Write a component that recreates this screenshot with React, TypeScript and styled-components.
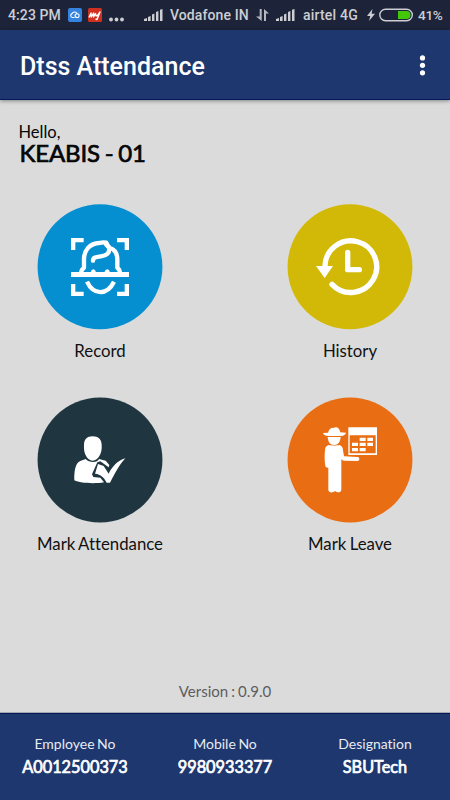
import React from "react";
import styled, { createGlobalStyle } from "styled-components";

const GlobalStyle = createGlobalStyle`
  * { box-sizing: border-box; }
  body { margin: 0; background: #dbdbdb; }
`;

const Screen = styled.div`
  width: 450px;
  height: 800px;
  display: flex;
  flex-direction: column;
  background: #dbdbdb;
  font-family: Lato, sans-serif;
  font-variant-ligatures: none;
  overflow: hidden;
`;

const StatusBar = styled.div`
  height: 30px;
  flex: none;
  display: grid;
  grid-template-columns: 60px 20px 21px 35px 26px 86px 20px 27px 64px 12px 39px 32px;
  padding-left: 8px;
  align-items: center;
  background: #1d2439;
  color: #cdced3;
`;

const StatusText = styled.span<{ $size?: number; $spacing?: number }>`
  font: 500 ${(p) => p.$size ?? 14}px/30px Roboto, sans-serif;
  letter-spacing: ${(p) => p.$spacing ?? 0}px;
  white-space: nowrap;
`;

const Glyph = styled.svg`
  display: block;
`;

const AppBar = styled.header`
  height: 70px;
  flex: none;
  display: flex;
  align-items: center;
  justify-content: space-between;
  padding: 2px 20px 0;
  background: #1e376f;
  border-bottom: 1px solid #04195c;
  box-shadow: 0 1px 4px rgba(0, 0, 0, 0.4);
  z-index: 1;
`;

const Title = styled.h1`
  margin: 0;
  padding-top: 2px;
  font: 500 25px/30px Roboto, sans-serif;
  color: #fff;
`;

const MenuButton = styled.button`
  border: 0;
  padding: 0;
  background: none;
  width: 15px;
  height: 24px;
`;

const Content = styled.main`
  flex: 1;
  display: flex;
  flex-direction: column;
`;

const Greeting = styled.section`
  height: 104px;
  padding: 22px 18.5px 0;
  color: #050505;
`;

const Hello = styled.div`
  font-size: 16.5px;
  line-height: 20px;
`;

const UserName = styled.div`
  padding-left: 1px;
  font-size: 24px;
  line-height: 22px;
  letter-spacing: -0.15px;
  word-spacing: -1.2px;
  -webkit-text-stroke: 0.7px #050505;
`;

const Tiles = styled.section`
  display: grid;
  grid-template-columns: 1fr 1fr;
  grid-auto-rows: 193px;
  column-gap: 50px;
`;

const Tile = styled.div`
  display: flex;
  flex-direction: column;
  align-items: center;
`;

const TileLabel = styled.div`
  margin-top: 10px;
  font-size: 16.8px;
  line-height: 22px;
  white-space: nowrap;
  word-spacing: -1px;
  color: #111;
`;

const Version = styled.div`
  margin-top: auto;
  padding-bottom: 12px;
  text-align: center;
  font-size: 15px;
  line-height: 20px;
  word-spacing: -0.8px;
  color: #5d5d5d;
`;

const Footer = styled.footer`
  height: 87px;
  flex: none;
  display: grid;
  grid-template-columns: repeat(3, 1fr);
  padding-top: 19px;
  background: #1e376f;
  border-top: 1px solid #04195c;
  box-shadow: 0 -1px 0 #a6a8ad;
  color: #fff;
  text-align: center;
`;

const FieldName = styled.div`
  font-size: 14px;
  line-height: 22px;
  word-spacing: -1px;
  color: #e8ebf2;
`;

const FieldValue = styled.div`
  font-size: 16.3px;
  line-height: 24px;
  -webkit-text-stroke: 0.7px #fff;
`;

const Signal = () => (
  <Glyph width="20" height="14" viewBox="0 0 20 14" fill="#cdced3">
    <path d="M0 13v-2l3-1v3zM4 13V9l2.6-1v5zM8 13V6.5l2.4-1V13zM12 13V4l2.4-1v10zM16 13V1.8L18.5 1v12z" />
  </Glyph>
);

const RecordIcon = ({ color }: { color: string }) => (
  <Glyph width="126" height="126" viewBox="21 27 378 378" fill="none" stroke="#fff">
    <circle cx="210" cy="215.300" r="187.300" fill={color} stroke="none" />
    <path strokeWidth="13" d="M129.500 165V135.500H161M261 135.500H290.500V165M129.500 267V296.500H161M261 296.500H290.500V267" />
    <path fill="#fff" stroke="none" d="M123 231h174v15H123z" />
    <path strokeWidth="13" strokeLinejoin="round" d="M153 233l3-9 6-6V195C161 165 180 145 208 144C216 142 224 142 229 143C231 150 234 155 240 159C256 164 262 176 262 195V218l6 7 2 8" />
    <path strokeWidth="13" strokeLinecap="round" strokeLinejoin="round" d="M189 197C189 187 198 186 213 184C230 182 240 174 237 158L228 148" />
    <path fill="#fff" stroke="none" d="M182 232q2-9 8-9t8 9zM223 232q3-9 9-9t8 9z" />
    <path strokeWidth="13" d="M171 260C190 301 231 302 252 260" />
  </Glyph>
);

const HistoryIcon = ({ color }: { color: string }) => (
  <Glyph width="126" height="126" viewBox="21 27 378 378" fill="none" stroke="#fff" strokeLinecap="round">
    <circle cx="210" cy="215.300" r="187.300" fill={color} stroke="none" />
    <path strokeWidth="16" d="M135 216A77.500 77.500 0 1 1 156 268" />
    <path fill="#fff" stroke="none" d="M108 213H159L134 249z" />
    <path strokeWidth="16" strokeLinejoin="round" d="M203 172V224H238" />
  </Glyph>
);

const AttendanceIcon = ({ color }: { color: string }) => (
  <Glyph width="126" height="126" viewBox="21 21 378 378" fill="#fff">
    <circle cx="210" cy="210" r="187.300" fill={color} />
    <path d="M188 139C205 139 215 149 215 165C217 190 205 211 188 212C171 211 160 190 162 165C162 149 171 139 188 139z" />
    <path d="M167 207C175 217 202 221 207 207L227 212L238 225L236 232L211 214L202 217L186 253L190 261L211 263L222 277C194 282 151 280 133 271C132 245 136 218 151 213z" />
    <path d="M204 222L221 228L236 251C246 231 262 212 286 205C266 226 255 251 240 278H230C224 265 212 252 195 251z" />
  </Glyph>
);

const LeaveIcon = ({ color }: { color: string }) => (
  <Glyph width="126" height="126" viewBox="21 21 378 378" fill="#fff">
    <circle cx="210" cy="210" r="187.300" fill={color} />
    <path d="M129 129L144 128C147 117 155 112 161 114C168 108 179 113 181 127L198 128C197 135 188 138 180 138H145C138 138 130 135 129 129z" />
    <path d="M143 141H182C181 156 174 165 162 165S144 156 143 141z" />
    <path d="M146 165C152 167 173 167 179 165C186 168 189 173 189 181L192 199L233 201C239 202 240 210 234 213L191 212L184 208V299C183 308 172 309 165 303C157 310 146 308 145 300V234L137 231C134 221 133 201 135 181C135 172 139 167 146 165z" />
    <path fillRule="evenodd" d="M205 112h86v83h-86zM209 136v54h78v-54z" />
    <path d="M239 143h18v10h-18zM262 143h17v10h-17zM216 158h18v10h-18zM239 158h18v10h-18zM262 158h17v10h-17zM216 174h18v10h-18zM239 174h18v10h-18z" />
  </Glyph>
);

const tiles = [
  { label: "Record", color: "#058fd1", Icon: RecordIcon },
  { label: "History", color: "#d2b908", Icon: HistoryIcon },
  { label: "Mark Attendance", color: "#1f3641", Icon: AttendanceIcon },
  { label: "Mark Leave", color: "#e96d12", Icon: LeaveIcon },
];

const fields = [
  { name: "Employee No", value: "A0012500373" },
  { name: "Mobile No", value: "9980933377" },
  { name: "Designation", value: "SBUTech" },
];

export default function App() {
  return (
    <>
      <GlobalStyle />
      <Screen>
        <StatusBar>
          <StatusText $spacing={0.1}>4:23 PM</StatusText>
          <Glyph width="14" height="14" viewBox="0 0 14 14">
            <rect width="14" height="14" rx="2" fill="#3484df" />
            <path d="M6.500 9.500H4.500a2 2 0 0 1-.4-3.900A2.800 2.800 0 0 1 9 5.200M8.200 9.500a2 2 0 1 1 1.800 0zM8.400 9.400L6.500 7.400" fill="none" stroke="#fff" strokeWidth="1.100" />
          </Glyph>
          <Glyph width="14" height="14" viewBox="0 0 14 14">
            <rect width="14" height="14" rx="1.500" fill="#d0301f" />
            <path d="M1 9.500L3 5L3.200 9L5.600 5L5.500 9L7.500 5.500L8 7.800L9.500 7.500L12 4L9 11.500L7.500 11" fill="none" stroke="#fff" strokeWidth="1.400" strokeLinejoin="round" />
          </Glyph>
          <Glyph width="16" height="14" viewBox="0 0 16 14" fill="#cdced3">
            <circle cx="2" cy="11.500" r="1.900" />
            <circle cx="7.500" cy="11.500" r="1.900" />
            <circle cx="13" cy="11.500" r="1.900" />
          </Glyph>
          <Signal />
          <StatusText $spacing={0.1}>Vodafone IN</StatusText>
          <Glyph width="14" height="14" viewBox="0 0 14 14" fill="#b6b8c0">
            <path d="M3.700 1H5.700V13L0 8.500H3.700zM8 13V1L13 5.500H10V13z" />
          </Glyph>
          <Signal />
          <StatusText $spacing={0.2}>airtel 4G</StatusText>
          <Glyph width="8" height="12" viewBox="0 0 8 12" fill="#cdced3">
            <path d="M5.500 0L0 7H3.300L2 12L8 4.800H4.600z" />
          </Glyph>
          <Glyph width="35" height="14" viewBox="0 0 35 14">
            <rect x=".8" y="1.300" width="32.500" height="11.400" rx="5.700" fill="none" stroke="#cdced3" strokeWidth="1.400" />
            <path d="M19 3H27.500A4 4 0 0 1 27.500 11H19z" fill="#44c60b" />
          </Glyph>
          <StatusText $size={13.6} $spacing={-0.3}>41%</StatusText>
        </StatusBar>
        <AppBar>
          <Title>Dtss Attendance</Title>
          <MenuButton aria-label="More options">
            <Glyph width="15" height="24" viewBox="0 0 15 24" fill="#fff">
              <circle cx="7.500" cy="3.900" r="2.600" />
              <circle cx="7.500" cy="11.300" r="2.600" />
              <circle cx="7.500" cy="18.800" r="2.600" />
            </Glyph>
          </MenuButton>
        </AppBar>
        <Content>
          <Greeting>
            <Hello>Hello,</Hello>
            <UserName>KEABIS - 01</UserName>
          </Greeting>
          <Tiles>
            {tiles.map(({ label, color, Icon }) => (
              <Tile key={label}>
                <Icon color={color} />
                <TileLabel>{label}</TileLabel>
              </Tile>
            ))}
          </Tiles>
          <Version>Version : 0.9.0</Version>
        </Content>
        <Footer>
          {fields.map((f) => (
            <div key={f.name}>
              <FieldName>{f.name}</FieldName>
              <FieldValue>{f.value}</FieldValue>
            </div>
          ))}
        </Footer>
      </Screen>
    </>
  );
}
